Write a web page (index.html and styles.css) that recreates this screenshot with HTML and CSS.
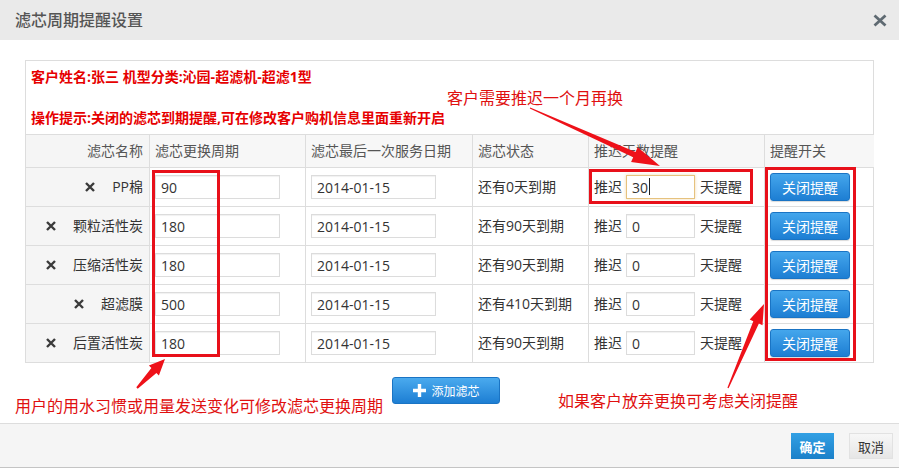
FILE: index.html
```html
<!DOCTYPE html>
<html lang="zh-CN">
<head>
<meta charset="utf-8">
<title>滤芯周期提醒设置</title>
<link rel="stylesheet" href="styles.css">
</head>
<body>
<div class="dialog">
  <div class="dlg-head">
    <h1 class="dlg-title">滤芯周期提醒设置</h1>
    <button class="dlg-close" aria-label="关闭"><svg width="14" height="13" viewBox="0 0 14 13"><path d="M1.5 1.5L12.5 11.5M12.5 1.5L1.5 11.5" stroke="#5f6a72" stroke-width="2.8"/></svg></button>
  </div>
  <div class="dlg-body">
    <div class="box">
      <div class="info">
        <p class="info-line">客户姓名:张三 机型分类:沁园-超滤机-超滤1型</p>
        <p class="info-line second">操作提示:关闭的滤芯到期提醒,可在修改客户购机信息里面重新开启</p>
      </div>
      <table class="grid">
        <colgroup>
          <col class="w1"><col class="w2"><col class="w3"><col class="w4"><col class="w5"><col class="w6">
        </colgroup>
        <thead>
          <tr><th class="c-name">滤芯名称</th><th>滤芯更换周期</th><th>滤芯最后一次服务日期</th><th>滤芯状态</th><th>推迟天数提醒</th><th>提醒开关</th></tr>
        </thead>
        <tbody>
          <tr>
            <td class="c-name"><span class="del"><svg width="10" height="10" viewBox="0 0 10 10"><path d="M1 1L9 9M9 1L1 9" stroke="#3a3a3a" stroke-width="2.4"/></svg></span>PP棉</td>
            <td><input class="ipt w-cycle" value="90"></td>
            <td><input class="ipt w-date" value="2014-01-15"></td>
            <td>还有0天到期</td>
            <td><span class="delay">推迟<input class="ipt w-days focus" value="30"><span class="caret"></span>天提醒</span></td>
            <td><button class="btn-close">关闭提醒</button></td>
          </tr>
          <tr>
            <td class="c-name"><span class="del"><svg width="10" height="10" viewBox="0 0 10 10"><path d="M1 1L9 9M9 1L1 9" stroke="#3a3a3a" stroke-width="2.4"/></svg></span>颗粒活性炭</td>
            <td><input class="ipt w-cycle" value="180"></td>
            <td><input class="ipt w-date" value="2014-01-15"></td>
            <td>还有90天到期</td>
            <td><span class="delay">推迟<input class="ipt w-days" value="0">天提醒</span></td>
            <td><button class="btn-close">关闭提醒</button></td>
          </tr>
          <tr>
            <td class="c-name"><span class="del"><svg width="10" height="10" viewBox="0 0 10 10"><path d="M1 1L9 9M9 1L1 9" stroke="#3a3a3a" stroke-width="2.4"/></svg></span>压缩活性炭</td>
            <td><input class="ipt w-cycle" value="180"></td>
            <td><input class="ipt w-date" value="2014-01-15"></td>
            <td>还有90天到期</td>
            <td><span class="delay">推迟<input class="ipt w-days" value="0">天提醒</span></td>
            <td><button class="btn-close">关闭提醒</button></td>
          </tr>
          <tr>
            <td class="c-name"><span class="del"><svg width="10" height="10" viewBox="0 0 10 10"><path d="M1 1L9 9M9 1L1 9" stroke="#3a3a3a" stroke-width="2.4"/></svg></span>超滤膜</td>
            <td><input class="ipt w-cycle" value="500"></td>
            <td><input class="ipt w-date" value="2014-01-15"></td>
            <td>还有410天到期</td>
            <td><span class="delay">推迟<input class="ipt w-days" value="0">天提醒</span></td>
            <td><button class="btn-close">关闭提醒</button></td>
          </tr>
          <tr>
            <td class="c-name"><span class="del"><svg width="10" height="10" viewBox="0 0 10 10"><path d="M1 1L9 9M9 1L1 9" stroke="#3a3a3a" stroke-width="2.4"/></svg></span>后置活性炭</td>
            <td><input class="ipt w-cycle" value="180"></td>
            <td><input class="ipt w-date" value="2014-01-15"></td>
            <td>还有90天到期</td>
            <td><span class="delay">推迟<input class="ipt w-days" value="0">天提醒</span></td>
            <td><button class="btn-close">关闭提醒</button></td>
          </tr>
        </tbody>
      </table>
    </div>
    <div class="actions">
      <button class="btn-add"><svg width="13" height="13" viewBox="0 0 13 13"><path d="M6.5 0V13M0 6.5H13" stroke="#fff" stroke-width="3.4"/></svg>添加滤芯</button>
    </div>
  </div>
  <div class="dlg-foot">
    <button class="btn-ok">确定</button>
    <button class="btn-cancel">取消</button>
  </div>

  <div class="overlay">
    <svg class="marks" width="899" height="468" viewBox="0 0 899 468">
      <g fill="none" stroke="#e8101a" stroke-width="3">
        <rect x="153.5" y="171.5" width="65" height="184"/>
        <rect x="590.5" y="170.5" width="161" height="32"/>
        <rect x="766.5" y="168.5" width="88" height="191"/>
      </g>
      <g fill="#ee1119">
        <polygon points="530.2,107.5 635.6,151.9 637.7,147.3 660,166 631.1,161.9 633.2,157.3 529.8,108.5"/>
        <polygon points="137.7,388.7 156.4,372.9 158.9,375.4 165,359 148.9,365.6 151.4,368.1 136.3,387.3"/>
        <polygon points="728.6,388.3 758.9,323.6 762.5,325.2 764,304 749.7,319.6 753.3,321.2 727.4,387.7"/>
      </g>
    </svg>
    <div class="note note-delay">客户需要推迟一个月再换</div>
    <div class="note note-cycle">用户的用水习惯或用量发送变化可修改滤芯更换周期</div>
    <div class="note note-close">如果客户放弃更换可考虑关闭提醒</div>
  </div>
</div>
</body>
</html>
```
FILE: styles.css
```css
* { box-sizing: border-box; }
html, body { margin: 0; padding: 0; background: #fff; }
body {
  font-family: "Open Sans", "Noto Sans CJK SC", sans-serif;
  font-size: 14px;
  color: #333;
}
.dialog {
  position: relative;
  width: 899px;
  height: 468px;
  display: flex;
  flex-direction: column;
  overflow: hidden;
}
.dlg-head {
  height: 40px;
  flex: none;
  background: #eaeaea;
  display: flex;
  align-items: center;
  justify-content: space-between;
  padding: 0 12px 0 15px;
}
.dlg-title {
  margin: 0;
  font-size: 16px;
  font-weight: 500;
  color: #555;
  line-height: 20px;
}
.dlg-close {
  border: 0;
  background: none;
  padding: 0;
  width: 14px;
  height: 13px;
  display: block;
  margin-top: 1px;
}
.dlg-close svg { display: block; }
.dlg-body {
  flex: 1;
  padding: 20px 25px 0 25px;
}
.box {
  border: 1px solid #ddd;
}
.info {
  height: 73px;
  padding: 7px 5px 0 5px;
}
.info-line {
  margin: 0;
  font-size: 14px;
  font-weight: bold;
  color: #e60000;
  line-height: 18px;
}
.info-line.second { margin-top: 23px; }
.grid {
  width: 100%;
  table-layout: fixed;
  border-collapse: separate;
  border-spacing: 0;
}
.w1 { width: 123px; }
.w2 { width: 156px; }
.w3 { width: 167px; }
.w4 { width: 116px; }
.w5 { width: 176px; }
.w6 { width: 110px; }
.grid th, .grid td {
  border-top: 1px solid #ddd;
  border-left: 1px solid #ddd;
  padding: 0 5px;
  text-align: left;
  vertical-align: middle;
  white-space: nowrap;
}
.grid th:first-child, .grid td:first-child { border-left: 0; }
.grid th {
  height: 33px;
  font-weight: normal;
  color: #555;
  background: #f7f7f7;
  line-height: 20px;
}
.grid td {
  height: 39px;
  line-height: 20px;
  color: #333;
}
.grid .c-name {
  text-align: right;
  padding-right: 6px;
  background: #f5f5f5;
}
.del {
  display: inline-block;
  width: 10px;
  height: 10px;
  margin-right: 17px;
  vertical-align: 0;
}
.del svg { display: block; }
.ipt {
  height: 24px;
  border: 1px solid #dcdcdc;
  box-shadow: inset 0 1px 1px rgba(0,0,0,0.06);
  padding: 0 5px;
  font-family: "Open Sans", sans-serif;
  font-size: 14px;
  color: #333;
  background: #fff;
  vertical-align: middle;
  outline: none;
}
.w-cycle { width: 125px; }
.w-date { width: 125px; }
.w-days { width: 69px; margin: 0 5px 0 4px; }
.ipt.focus {
  border-color: #e6c27e;
  box-shadow: 0 0 3px rgba(230,180,90,0.5);
}
.delay {
  display: inline-flex;
  align-items: center;
  position: relative;
}
.caret {
  position: absolute;
  left: 55px;
  top: 3px;
  width: 1px;
  height: 17px;
  background: #222;
}
.btn-close {
  width: 80px;
  height: 28px;
  border: 1px solid #1a74c4;
  border-radius: 3px;
  background: linear-gradient(#44a6ec, #1d7ed3);
  color: #fff;
  font-family: "Noto Sans CJK SC", sans-serif;
  font-size: 14px;
  padding: 0;
  vertical-align: middle;
  box-shadow: 0 1px 1px rgba(0,0,0,0.15);
}
.actions {
  display: flex;
  justify-content: center;
  padding-right: 8px;
  margin-top: 14px;
}
.btn-add {
  width: 108px;
  height: 27px;
  border: 1px solid #1a74c4;
  border-radius: 3px;
  background: linear-gradient(#4aaaee, #1d7ed3);
  color: #fff;
  font-family: "Noto Sans CJK SC", sans-serif;
  font-size: 12px;
  display: flex;
  align-items: center;
  padding: 0 0 0 20px;
  gap: 6px;
}
.btn-add svg { display: block; }
.dlg-foot {
  flex: none;
  height: 45px;
  border-top: 1px solid #ddd;
  border-bottom: 1px solid #c4c4c4;
  background: #f5f5f5;
  display: flex;
  align-items: center;
  justify-content: flex-end;
  gap: 15px;
  padding: 1px 6px 0 0;
}
.btn-ok {
  width: 43px;
  height: 26px;
  border: 0;
  background: linear-gradient(#32a0e4, #1b80c9);
  color: #fff;
  font-family: "Noto Sans CJK SC", sans-serif;
  font-size: 13px;
  font-weight: bold;
  padding: 0;
}
.btn-cancel {
  width: 44px;
  height: 26px;
  border: 1px solid #e2e2e2;
  background: linear-gradient(#f7f7f7, #e6e6e6);
  color: #333;
  font-family: "Noto Sans CJK SC", sans-serif;
  font-size: 13px;
  padding: 0;
}
.overlay {
  position: absolute;
  left: 0;
  top: 0;
  width: 899px;
  height: 468px;
  pointer-events: none;
}
.marks { position: absolute; left: 0; top: 0; }
.note {
  position: absolute;
  font-family: "Noto Sans CJK SC", sans-serif;
  font-size: 16px;
  line-height: 20px;
  color: #e01010;
  white-space: nowrap;
}
.note-delay { left: 447px; top: 87px; }
.note-cycle { left: 15px; top: 395px; }
.note-close { left: 558px; top: 390px; }
```
